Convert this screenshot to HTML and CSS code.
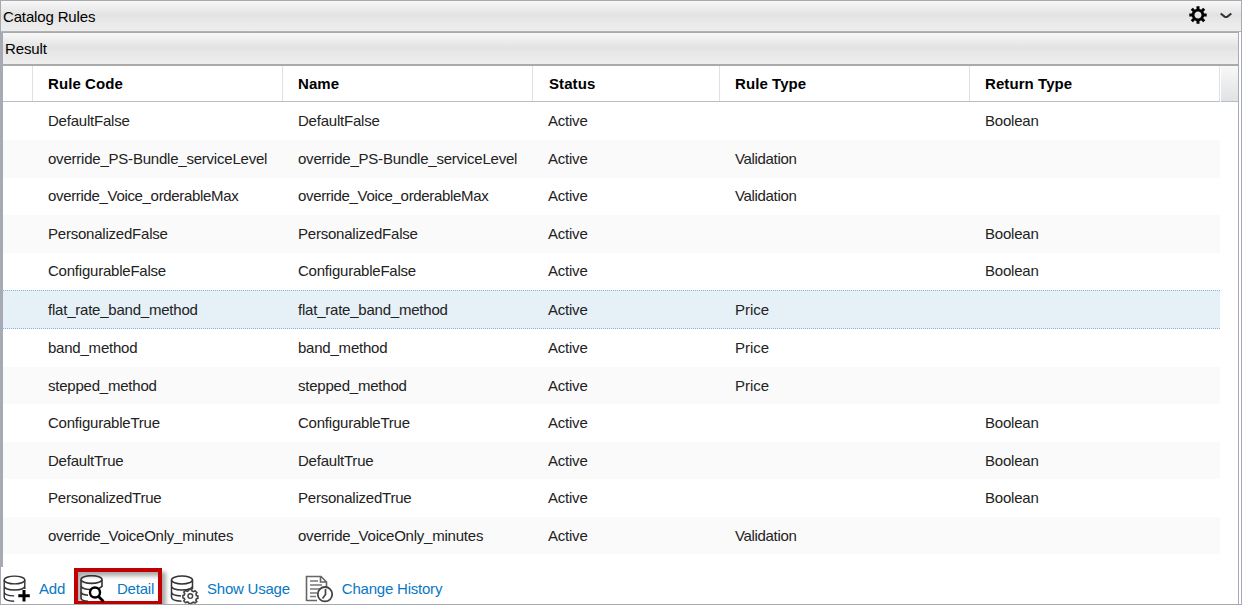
FILE: index.html
```
<!DOCTYPE html>
<html lang="en">
<head>
<meta charset="utf-8">
<title>Catalog Rules</title>
<link rel="stylesheet" href="styles.css">
</head>
<body>
<main class="window">
  <header class="bar titlebar">
    <span>Catalog Rules</span>
    <span class="tools">
      <svg width="18" height="18" viewBox="-9 -9 18 18"><g stroke="#000" stroke-width="3"><path d="M0-8.700V-5M0 8.700V5M-8.700 0H-5M8.700 0H5M-6.200-6.200-4-4M6.200 6.200 4 4M-6.200 6.200-4 4M6.200-6.200 4-4"/></g><circle r="4.900" fill="none" stroke="#000" stroke-width="2.700"/></svg>
      <svg class="chevron" width="12" height="8" viewBox="0 0 12 8"><path d="M.7 1.500 4.500 4.600Q6 5.400 7.500 4.600L11.300 1.500" fill="none" stroke="#333" stroke-width="2.100"/></svg>
    </span>
  </header>
  <section class="panel">
    <h2 class="bar result">Result</h2>
    <div class="head">
      <div class="row labels"><b></b><b>Rule Code</b><b>Name</b><b class="status">Status</b><b>Rule Type</b><b>Return Type</b></div>
      <div class="corner"></div>
    </div>
    <div class="rows">
      <div class="row upper"><i></i><span>DefaultFalse</span><span>DefaultFalse</span><span>Active</span><span></span><span>Boolean</span></div>
      <div class="row upper"><i></i><span>override_PS-Bundle_serviceLevel</span><span>override_PS-Bundle_serviceLevel</span><span>Active</span><span class="tight">Validation</span><span></span></div>
      <div class="row upper"><i></i><span class="tight">override_Voice_orderableMax</span><span class="tight">override_Voice_orderableMax</span><span>Active</span><span class="tight">Validation</span><span></span></div>
      <div class="row upper"><i></i><span>PersonalizedFalse</span><span>PersonalizedFalse</span><span>Active</span><span></span><span>Boolean</span></div>
      <div class="row upper"><i></i><span>ConfigurableFalse</span><span>ConfigurableFalse</span><span>Active</span><span></span><span>Boolean</span></div>
      <div class="row selected"><i></i><span>flat_rate_band_method</span><span>flat_rate_band_method</span><span>Active</span><span class="price">Price</span><span></span></div>
      <div class="row"><i></i><span>band_method</span><span>band_method</span><span>Active</span><span class="price">Price</span><span></span></div>
      <div class="row"><i></i><span>stepped_method</span><span>stepped_method</span><span>Active</span><span class="price">Price</span><span></span></div>
      <div class="row"><i></i><span>ConfigurableTrue</span><span>ConfigurableTrue</span><span>Active</span><span></span><span>Boolean</span></div>
      <div class="row"><i></i><span>DefaultTrue</span><span>DefaultTrue</span><span>Active</span><span></span><span>Boolean</span></div>
      <div class="row"><i></i><span>PersonalizedTrue</span><span>PersonalizedTrue</span><span>Active</span><span></span><span>Boolean</span></div>
      <div class="row"><i></i><span>override_VoiceOnly_minutes</span><span>override_VoiceOnly_minutes</span><span>Active</span><span class="tight">Validation</span><span></span></div>
    </div>
  </section>
  <footer class="actions">
    <a class="action add">
      <svg width="28" height="29" viewBox="0 0 28 29"><g fill="none" stroke="#333" stroke-width="1.400"><ellipse cx="12.500" cy="5" rx="10.300" ry="3.900"/><path d="M2.200 5v17c0 2.300 4 4 10 4.200M22.800 5v9M2.200 11c0 2.400 4.500 4 10.300 4s10.300-1.600 10.300-4M2.200 17c0 2.300 4 3.800 10 3.900"/></g><path d="M22 15v11.500M16.300 20.800h11.500" stroke="#000" stroke-width="3"/></svg>
      <span>Add</span>
    </a>
    <a class="action detail">
      <svg width="28" height="29" viewBox="0 0 28 29"><g fill="none" stroke="#333" stroke-width="1.600"><ellipse cx="12.500" cy="4.500" rx="10.500" ry="3.900"/><path d="M2 5v18c0 2 3 3 7 3.400M23 5v7M2 10.500c0 2.400 4.500 4 9 4M23 10.500c0 1-1 2-3 2.800M2 16.500c0 2 3 3.500 7 3.700"/></g><circle cx="16" cy="17.500" r="5" fill="#fff" stroke="#000" stroke-width="2.400"/><path d="M19.500 21.500 24.500 26.500" stroke="#000" stroke-width="2.800"/></svg>
      <span>Detail</span>
    </a>
    <a class="action usage">
      <svg width="29" height="29" viewBox="0 0 29 29"><g fill="none" stroke="#333" stroke-width="1.500"><ellipse cx="12" cy="5" rx="10.500" ry="3.900"/><path d="M1.500 5v17c0 2.300 4 4 10 4.200M22.500 5v9M1.500 11c0 2.400 4.500 4 10.500 4s10.500-1.600 10.500-4M1.500 17c0 2.300 4 3.700 9.500 3.900"/></g><g transform="translate(20.300 20.500) scale(.9)"><path d="M-1.500-6.800h3l.5 1.900 1.600.6 1.700-1 2 2-1 1.700.5 1.600 1.600.5v2.600l-1.600.5-.6 1.500 1 1.700-2 1.500-1.500-.9-1.700.6-.5 1h-3l-.5-1.300-1.500-.6-1.700 1-2-2 1-1.600-.6-1.400-1.400-.5v-2.600l1.400-.4.6-1.600-1-1.700 2-2 1.700 1 1.500-.6z" fill="#fff" stroke="#444" stroke-width="1.800"/><circle cy=".6" r="2.600" fill="none" stroke="#444" stroke-width="1.600"/></g></svg>
      <span>Show Usage</span>
    </a>
    <a class="action history">
      <svg width="29" height="29" viewBox="0 0 29 29"><path d="M1.500 26V1.500H16L21.500 7v5M1.500 25.500H12M15.500 1.500V7H22" fill="none" stroke="#666" stroke-width="1.600"/><path d="M5 6h8M5 10h12M5 14h11M5 18h7M5 21.500h6" stroke="#777" stroke-width="1.400"/><circle cx="20" cy="19.200" r="7.200" fill="#fff" stroke="#444" stroke-width="1.800"/><path d="M20.500 14v5.500L17.500 23.500" fill="none" stroke="#444" stroke-width="1.700"/></svg>
      <span>Change History</span>
    </a>
  </footer>
</main>
</body>
</html>
```
FILE: styles.css
```
* { box-sizing: border-box; }
body { margin: 0; font: 15px "Liberation Sans", Arial, sans-serif; letter-spacing: -.22px; color: #222; background: #fff; }
.window { width: 1242px; height: 605px; overflow: hidden; border: 1px solid #a6aab5; border-top-color: #a9a9b0; display: flex; flex-direction: column; }
.bar { margin: 0; font-size: 15px; font-weight: normal; color: #000; display: flex; align-items: center; background: linear-gradient(#f8f8f8, #e2e2e2 48%, #e7e7e7 60%, #eee); }
.titlebar { flex: none; height: 31px; padding: 0 9px 0 2px; letter-spacing: -.15px; justify-content: space-between; border-bottom: 1px solid #b3b3b3; }
.tools { display: flex; align-items: center; gap: 13px; padding-bottom: 2px; }
.chevron { margin-top: 2px; }
.panel { flex: none; height: 535px; width: 1238px; border-left: 2px solid #a6aab5; border-right: 1px solid #a6aab5; }
.result { height: 34px; padding: 1px 0 2px 2px; letter-spacing: -.1px; border-top: 1px solid #a9a9a9; border-bottom: 2px solid #aaa; }
.head { display: flex; gap: 1px; height: 36px; }
.row { display: grid; grid-template-columns: 30px 250px 250px 187px 250px 250px; width: 1217px; height: 37.5px; align-items: center; }
.row > span { padding-left: 15px; white-space: nowrap; }
.row > .tight { letter-spacing: -.33px; }
.row > .price { letter-spacing: 0; }
.row:nth-child(even) { background: #fafafa; }
.upper { padding-bottom: 1px; }
.row.selected { height: 39px; background: #e5f0f7; border-top: 1px dotted #8eaee8; border-bottom: 1px dotted #8eaee8; }
.labels { height: 36px; color: #000; letter-spacing: .08px; border-bottom: 1px solid #b7bec7; }
.labels > b { height: 100%; padding: 0 0 1px 15px; border-right: 1px solid #e0e0e0; display: flex; align-items: center; }
.labels > .status { padding-left: 16px; }
.corner { flex: 1; background: linear-gradient(#f8f8f8, #e0e2e4); border-bottom: 1px solid #b7bec7; }
.rows { padding-top: .5px; }
.actions { flex: 1; display: flex; align-items: flex-start; height: 37px; width: 1238px; border-right: 1px solid #a6aab5; color: #0878c5; }
.action { display: flex; align-items: flex-start; white-space: nowrap; }
.action svg { flex: none; margin-top: 8px; }
.action span { margin-top: 13px; line-height: 17px; }
.add { width: 73px; padding-left: 1px; gap: 9px; }
.detail { width: 88px; height: 37px; margin-top: 1px; border: 4px solid #c00000; background: #fff; gap: 10px; padding-left: 1px; box-shadow: inset 3px 4px 4px #aaa, 4px 4px 4px #aaa; }
.detail svg { margin-top: 3px; }
.detail span { margin-top: 8px; }
.usage { margin-left: 8px; gap: 8px; }
.history { margin-left: 15px; gap: 8px; }
```
